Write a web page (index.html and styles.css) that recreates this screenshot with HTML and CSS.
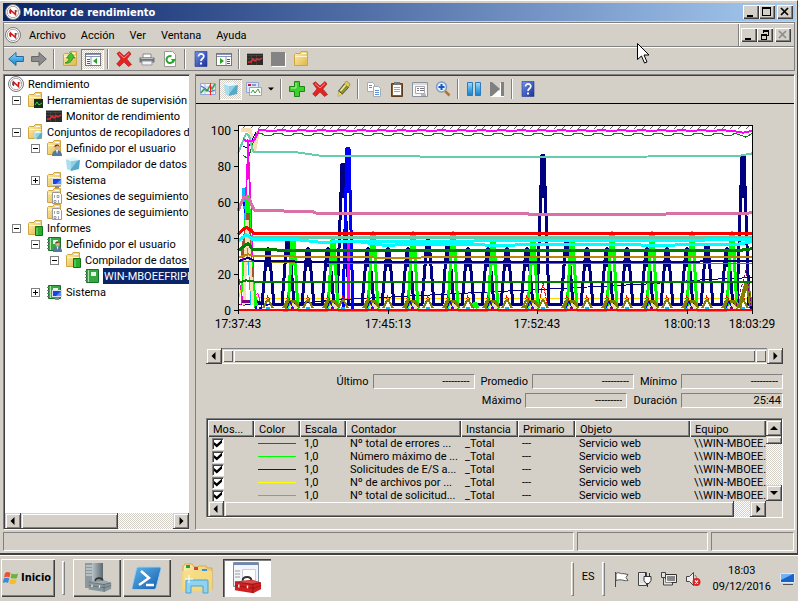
FILE: index.html
```html
<!DOCTYPE html>
<html lang="es">
<head>
<meta charset="utf-8">
<title>Monitor de rendimiento</title>
<link rel="stylesheet" href="styles.css">
</head>
<body>
<svg class="defs" aria-hidden="true">
  <defs>
    <linearGradient id="gBlue" x1="0" y1="0" x2="0" y2="1"><stop offset="0" stop-color="#a5dcf8"/><stop offset=".5" stop-color="#45aee8"/><stop offset="1" stop-color="#1b7cc4"/></linearGradient>
    <linearGradient id="gFold" x1="0" y1="0" x2="1" y2="1"><stop offset="0" stop-color="#fdf0b0"/><stop offset="1" stop-color="#e0b548"/></linearGradient>
    <linearGradient id="gHelp" x1="0" y1="0" x2="1" y2="1"><stop offset="0" stop-color="#6f93ea"/><stop offset="1" stop-color="#1b2f9a"/></linearGradient>
    <linearGradient id="gPs" x1="0" y1="0" x2="1" y2="1"><stop offset="0" stop-color="#5fb4ea"/><stop offset="1" stop-color="#125cae"/></linearGradient>
    <linearGradient id="gSteel" x1="0" y1="0" x2="1" y2="0"><stop offset="0" stop-color="#b9c3c8"/><stop offset="1" stop-color="#5b6970"/></linearGradient>
  </defs>
  <symbol id="gauge" viewBox="0 0 16 16"><circle cx="8" cy="8" r="7.5" fill="#fff" stroke="#777"/><circle cx="8" cy="8" r="5.7" fill="#fff" stroke="#aaa"/><path d="M5.500 10V6L10.500 10.500V6" fill="none" stroke="#d01818" stroke-width="1.500"/><path d="M4.500 9V6M11.800 8V6" stroke="#444" stroke-width=".7"/></symbol>
  <symbol id="folder" viewBox="0 0 16 16"><path d="M1.500 14.500V3.500l1-1H7l1-2h6.500v14z" fill="url(#gFold)" stroke="#d2a63f"/><path d="M2 5.500h12" stroke="#fff6cc"/><path d="M9 2.500h4" stroke="#fff"/></symbol>
  <symbol id="back" viewBox="0 0 16 16"><path d="M.7 8 8 1.500v4h7.400v5H8v4z" fill="url(#gBlue)" stroke="#2468a0"/></symbol>
  <symbol id="fwd" viewBox="0 0 16 16"><path d="M15.300 8 8 1.500v4H.6v5H8v4z" fill="#8c8c8c" stroke="#666"/></symbol>
  <symbol id="up" viewBox="0 0 16 16"><use href="#folder"/><path d="M3 12c3-1 4-3 4-5H4.500L9 1.500 13 7h-2.500c0 3-3 6-7.500 5z" fill="#41c52d" stroke="#1d801a" stroke-width=".7"/></symbol>
  <symbol id="panel" viewBox="0 0 16 16"><rect x=".5" y="2.500" width="15" height="12" fill="#fff" stroke="#777"/><path d="M1 3.500h14M1 5.500h14M6 6v8" stroke="#8b96b5"/><path d="M2 8.500h3M2 10.500h3M2 12.500h3" stroke="#557"/><path d="M12 7v6L8 10z" fill="#24a324"/></symbol>
  <symbol id="panel2" viewBox="0 0 16 16"><rect x=".5" y="2.500" width="15" height="12" fill="#fff" stroke="#777"/><path d="M1 3.500h14M1 5.500h14M10 6v8" stroke="#8b96b5"/><path d="M11 8.500h3M11 10.500h3M11 12.500h3" stroke="#557"/><path d="M4 7v6l4-3z" fill="#24a324"/></symbol>
  <symbol id="cross" viewBox="0 0 16 16"><path d="M1 2.500 3.500.8 8 5l5-4.500L15 3l-4.200 5L15.500 13.500 12.500 15.500 8 11l-4.500 4.500L.7 13 5 8z" fill="#e32424" stroke="#a31010" stroke-width=".6"/><path d="M3 2.500 8 7l5-4.500" fill="none" stroke="#f88"/></symbol>
  <symbol id="printer" viewBox="0 0 16 16"><path d="M4 3h8v4H4z" fill="#fff" stroke="#888"/><path d="M.5 6.500h15v5H.5z" fill="#70757c"/><path d="M2 7.500h12" stroke="#b8bcc2"/><path d="M3 10h10v4H3z" fill="#eef4fa" stroke="#999"/></symbol>
  <symbol id="refresh" viewBox="0 0 16 16"><path d="M2.500.5h8l3 3v12h-11z" fill="#fff" stroke="#999"/><path d="M11.500 9a3.500 3.500 0 1 1-2-3.600" fill="none" stroke="#2da52d" stroke-width="2"/><path d="M9 8h5l-2.500 4z" fill="#2da52d"/></symbol>
  <symbol id="help" viewBox="0 0 16 16"><path d="M2 .5h12v15H2z" fill="url(#gHelp)" stroke="#223a8a" stroke-width=".6"/><path d="M5.500 5.500c0-3.500 5.500-3.300 5.300 0C10.800 7.500 8 7.500 8 10" fill="none" stroke="#fff" stroke-width="1.700"/><path d="M7 11.500h2v2H7z" fill="#fff"/></symbol>
  <symbol id="mon" viewBox="0 0 16 16"><path d="M0 2h16v12H0z" fill="#2b2b2b"/><path d="M0 2.500h16" stroke="#999"/><path d="M0 4.500h16M0 7.500h16M4.500 4v10M9.500 4v10" stroke="#555" stroke-width=".5"/><path d="M1 11h3l2-3 2 2 2-2 2 1 3-2" fill="none" stroke="#e62e2e" stroke-width="1.500"/></symbol>
  <symbol id="stopg" viewBox="0 0 16 16"><path d="M2 2h14v14H2z" fill="#fff"/><path d="M1 1h14v14H1z" fill="#848484"/></symbol>
  <symbol id="cube" viewBox="0 0 16 16"><path d="m1 3 5 2v10l-4-2z" fill="#a9deec"/><path d="m6 5 9-1-1 9-8 2z" fill="#56a9c9"/><path d="m6 5 7-.8L6 13z" fill="#8fd0e4"/><path d="m1 3 8-2 6 3-9 1z" fill="#e6f8fc"/></symbol>
  <symbol id="fmon" viewBox="0 0 16 16"><use href="#folder"/><path d="M7 7h9v9H7z" fill="#1c2b1c"/><path d="M8 13l2-3 2 3 3-2" fill="none" stroke="#38d838"/></symbol>
  <symbol id="fcube" viewBox="0 0 16 16"><use href="#folder"/><use href="#cube" x="6" y="6" width="10" height="10"/></symbol>
  <symbol id="person" viewBox="0 0 10 12"><circle cx="5" cy="3" r="2.600" fill="#e0ae83"/><path d="M2.500 3C2-.5 8-.5 7.500 3L6 1.500z" fill="#5a3b20"/><path d="M0 12c0-8 10-8 10 0z" fill="#56789a"/><path d="m4 6 1 4 1-4z" fill="#fff"/></symbol>
  <symbol id="fuser" viewBox="0 0 16 16"><use href="#folder"/><use href="#person" x="6" y="4" width="10" height="12"/></symbol>
  <symbol id="pc" viewBox="0 0 10 10"><path d="M0 0h10v7H0z" fill="#dde"/><path d="M1 1h8v5H1z" fill="#1549d8"/><path d="m4 6 5-5v5z" fill="#5d90f5"/><path d="M3 8h4v2H3z" fill="#889"/></symbol>
  <symbol id="fsys" viewBox="0 0 16 16"><use href="#folder"/><use href="#pc" x="6" y="6" width="10" height="10"/></symbol>
  <symbol id="fbin" viewBox="0 0 16 16"><use href="#folder"/><path d="M6.500 4.500h7l2 2v9h-9z" fill="#fff" stroke="#999"/><path d="M8.500 7v3M11 7.500h2v2h-2zM8 12.500h2v2H8zM12.500 12v3" stroke="#889" stroke-width=".8" fill="none"/></symbol>
  <symbol id="frep" viewBox="0 0 16 16"><use href="#folder"/><path d="M8.500 6.500h7v9h-7z" fill="#27ae2d" stroke="#13711a"/><path d="M10 8v7" stroke="#7ae37a"/></symbol>
  <symbol id="book" viewBox="0 0 16 16"><path d="M2.500 1.500h12v13h-12z" fill="#35a844" stroke="#167027"/><path d="M4.500 2v12" stroke="#a9e5a9"/><path d="M1 3.500h3M1 6.500h3M1 9.500h3M1 12.500h3" stroke="#777"/><path d="M7 4h5v4H7z" fill="#e6f7e6"/></symbol>
  <symbol id="buser" viewBox="0 0 16 16"><use href="#book"/><use href="#person" x="7" y="5" width="9" height="11"/></symbol>
  <symbol id="bsys" viewBox="0 0 16 16"><use href="#book"/><use href="#pc" x="6" y="6" width="10" height="10"/></symbol>
  <symbol id="chart1" viewBox="0 0 16 16"><path d="M.5 2.500h15v11H.5z" fill="#eef3fc" stroke="#8fa6d6"/><path d="M1 6h14M1 10h14M5 3v10M13 3v10" stroke="#b5c5e8"/><path d="m1 12 3-4 3 2 3-5 2 3 3-5" fill="none" stroke="#37a637" stroke-width="1.500"/><path d="m1 5 5 3 4 3 5-2" fill="none" stroke="#4167c4"/><path d="M10.500 2v12" stroke="#e22"/></symbol>
  <symbol id="chart2" viewBox="0 0 16 16"><path d="M.5 1.500h12v10H.5z" fill="#dfe7f7" stroke="#8fa6d6"/><path d="M2 3h3v2H2z" fill="#b02040"/><path d="M6 3h4v2H6z" fill="#8898cc"/><path d="M3.500 6.500h12v8h-12z" fill="#fff" stroke="#8fa6d6"/><path d="m5 12 2-3 2 3 3-4 2 4" fill="none" stroke="#3a9a3a"/></symbol>
  <symbol id="plus" viewBox="0 0 16 16"><path d="M5.500.5h5v5h5v5h-5v5h-5v-5h-5v-5h5z" fill="#3fcf2f" stroke="#178a12"/><path d="M7 2v5H2" fill="none" stroke="#b1f5a0"/></symbol>
  <symbol id="pen" viewBox="0 0 16 16"><path d="m3 15.500.5-5.500 4 3z" fill="#f0e040" stroke="#997" stroke-width=".5"/><path d="m3.500 10 5.500-7 4.500 3.500-6 6.500z" fill="#8d9330" stroke="#444" stroke-width=".8"/><path d="m9 3 2.500-3L15 3l-1.500 3.500z" fill="#e3d23a" stroke="#555" stroke-width=".5"/><path d="m5.500 10 5-6" stroke="#f1f08c" stroke-width="1.500"/></symbol>
  <symbol id="copy" viewBox="0 0 16 16"><path d="M1.500 1.500h5l2 2v7h-7z" fill="#fff" stroke="#a4acb8"/><path d="M7.500 5.500h5l2 2v8h-7z" fill="#fff" stroke="#a4acb8"/><path d="M3 4.500h3M3 6.500h3M9 9.500h4M9 11.500h4M9 13.500h4" stroke="#5a90d8"/></symbol>
  <symbol id="clip" viewBox="0 0 16 16"><path d="M2.500 2.500h11v13h-11z" fill="#8a5a30" stroke="#5e3c1c"/><path d="M4 4h8v10H4z" fill="#fff"/><path d="M5 1h6v3H5z" fill="#777"/><path d="M5 6.500h6M5 8.500h6M5 10.500h6" stroke="#9aa"/></symbol>
  <symbol id="props" viewBox="0 0 16 16"><path d="M.5 1.500h15v14H.5z" fill="#f7f7f7" stroke="#8c919a"/><path d="M1 3h14" stroke="#b9c0cc"/><path d="M3.500 5.500h9v7h-9z" fill="#fff" stroke="#aaa"/><path d="M5 7.500h2M5 9.500h2M8 7.500h4M8 9.500h4M9 14h5" stroke="#778"/></symbol>
  <symbol id="mag" viewBox="0 0 16 16"><path d="m10 10 4.500 4.500" stroke="#b8722c" stroke-width="2.500"/><circle cx="6.500" cy="6" r="5" fill="#e6f3fe" stroke="#7d9cc4" stroke-width="1.500"/><path d="M6.500 3v6M3.500 6h6" stroke="#1656c0" stroke-width="2"/></symbol>
  <symbol id="pause" viewBox="0 0 16 16"><path d="M1.500 1.500h5v13h-5zM9.500 1.500h5v13h-5z" fill="url(#gBlue)" stroke="#2a7cc0"/></symbol>
  <symbol id="step" viewBox="0 0 16 16"><path d="m2 2 9 8V2h4v14h-4l-9 0z" fill="#fff"/><path d="M1 1h2l8 7-8 7H1zM12 1h3v14h-3z" fill="#808080"/></symbol>
  <symbol id="al" viewBox="0 0 8 8"><path d="M5.500 0v8l-4-4z"/></symbol>
  <symbol id="ar" viewBox="0 0 8 8"><path d="M2.500 0v8l4-4z"/></symbol>
  <symbol id="au" viewBox="0 0 8 8"><path d="M0 6h8L4 2z"/></symbol>
  <symbol id="ad" viewBox="0 0 8 8"><path d="M0 2h8L4 6z"/></symbol>
  <symbol id="wmin" viewBox="0 0 10 10"><path d="M1 8h6v2H1z"/></symbol>
  <symbol id="wmax" viewBox="0 0 10 10"><path d="M0 0h9v9H0zM1 2v6h7V2z" fill-rule="evenodd"/></symbol>
  <symbol id="wres" viewBox="0 0 10 10"><path d="M3 0h6v6H7V5h1V2H4v1H3zM1 4h6v6H1zM2 6v3h4V6z" fill-rule="evenodd"/></symbol>
  <symbol id="wcls" viewBox="0 0 10 10"><path d="m1 1 7 7M8 1 1 8" stroke="currentColor" stroke-width="1.700"/></symbol>
  <symbol id="toolbox" viewBox="0 0 30 18"><path d="M10 5c0-5 9-5 9 0" fill="none" stroke="#333" stroke-width="2"/><path d="M2 6 20 4l9 3v7l-8 4-19-3z" fill="currentColor"/><path d="m2 6 18 3 9-2M20.500 9v9M2 10l19 3 8-3" stroke="#0004" fill="none"/><path d="m3 6.500 17-2 7 2.500-7 1z" fill="#fff3"/><path d="M6 9v3M15 10v3" stroke="#eee" stroke-width="1.500"/></symbol>
</svg>

<main class="window">
  <header class="titlebar">
    <svg class="ico"><use href="#gauge"/></svg>
    <h1>Monitor de rendimiento</h1>
    <div class="winbtns">
      <button class="wb" aria-label="Minimizar"><svg><use href="#wmin"/></svg></button>
      <button class="wb" aria-label="Maximizar"><svg><use href="#wmax"/></svg></button>
      <button class="wb last" aria-label="Cerrar"><svg><use href="#wcls"/></svg></button>
    </div>
  </header>

  <div class="bars">
    <nav class="menubar">
      <svg class="ico"><use href="#gauge"/></svg>
      <button>Archivo</button><button>Acción</button><button>Ver</button><button>Ventana</button><button>Ayuda</button>
      <div class="winbtns mdi">
        <button class="wb" aria-label="Minimizar consola"><svg><use href="#wmin"/></svg></button>
        <button class="wb" aria-label="Restaurar consola"><svg><use href="#wres"/></svg></button>
        <button class="wb last" disabled aria-label="Cerrar consola"><svg><use href="#wcls"/></svg></button>
      </div>
    </nav>
    <div class="toolbar" role="toolbar">
      <button class="tb" aria-label="Atrás"><svg><use href="#back"/></svg></button>
      <button class="tb" aria-label="Adelante"><svg><use href="#fwd"/></svg></button>
      <i class="sep"></i>
      <button class="tb" aria-label="Subir"><svg><use href="#up"/></svg></button>
      <button class="tb on" aria-label="Árbol"><svg><use href="#panel"/></svg></button>
      <i class="sep"></i>
      <button class="tb" aria-label="Eliminar"><svg><use href="#cross"/></svg></button>
      <button class="tb" aria-label="Imprimir"><svg><use href="#printer"/></svg></button>
      <button class="tb" aria-label="Actualizar"><svg><use href="#refresh"/></svg></button>
      <i class="sep"></i>
      <button class="tb" aria-label="Ayuda"><svg><use href="#help"/></svg></button>
      <button class="tb" aria-label="Panel"><svg><use href="#panel2"/></svg></button>
      <i class="sep"></i>
      <button class="tb" aria-label="Monitor"><svg><use href="#mon"/></svg></button>
      <button class="tb" aria-label="Detener"><svg><use href="#stopg"/></svg></button>
      <button class="tb" aria-label="Carpeta"><svg><use href="#folder"/></svg></button>
    </div>
  </div>

  <div class="panes">
    <aside class="treepane">
      <ul class="tree">
        <li class="l0"><svg><use href="#gauge"/></svg><span>Rendimiento</span></li>
        <li class="l1"><b class="box"></b><svg><use href="#fmon"/></svg><span>Herramientas de supervisión</span></li>
        <li class="l2 leaf"><svg><use href="#mon"/></svg><span>Monitor de rendimiento</span></li>
        <li class="l1"><b class="box"></b><svg><use href="#fcube"/></svg><span>Conjuntos de recopiladores de</span></li>
        <li class="l2"><b class="box"></b><svg><use href="#fuser"/></svg><span>Definido por el usuario</span></li>
        <li class="l3 leaf"><svg><use href="#cube"/></svg><span>Compilador de datos I</span></li>
        <li class="l2"><b class="box plus"></b><svg><use href="#fsys"/></svg><span>Sistema</span></li>
        <li class="l2 leaf"><svg><use href="#fbin"/></svg><span>Sesiones de seguimiento d</span></li>
        <li class="l2 leaf"><svg><use href="#fbin"/></svg><span>Sesiones de seguimiento d</span></li>
        <li class="l1"><b class="box"></b><svg><use href="#frep"/></svg><span>Informes</span></li>
        <li class="l2"><b class="box"></b><svg><use href="#buser"/></svg><span>Definido por el usuario</span></li>
        <li class="l3"><b class="box"></b><svg><use href="#frep"/></svg><span>Compilador de datos I</span></li>
        <li class="l4 leaf"><svg><use href="#book"/></svg><span class="sel">WIN-MBOEEFRIPI</span></li>
        <li class="l2"><b class="box plus"></b><svg><use href="#bsys"/></svg><span>Sistema</span></li>
      </ul>
      <div class="hscroll">
        <button class="sb" aria-label="Izquierda"><svg><use href="#al"/></svg></button>
        <div class="track"><div class="thumb half"></div></div>
        <button class="sb" aria-label="Derecha"><svg><use href="#ar"/></svg></button>
      </div>
    </aside>

    <section class="view">
      <div class="toolbar graphbar" role="toolbar">
        <button class="tb" aria-label="Ver actividad"><svg><use href="#chart1"/></svg></button>
        <button class="tb on" aria-label="Ver registro"><svg><use href="#cube"/></svg></button>
        <button class="tb" aria-label="Tipo de gráfico"><svg><use href="#chart2"/></svg></button>
        <button class="drop" aria-label="Más tipos"><svg><use href="#ad"/></svg></button>
        <i class="sep"></i>
        <button class="tb" aria-label="Agregar"><svg><use href="#plus"/></svg></button>
        <button class="tb" aria-label="Quitar"><svg><use href="#cross"/></svg></button>
        <button class="tb" aria-label="Resaltar"><svg><use href="#pen"/></svg></button>
        <i class="sep"></i>
        <button class="tb" aria-label="Copiar"><svg><use href="#copy"/></svg></button>
        <button class="tb" aria-label="Pegar"><svg><use href="#clip"/></svg></button>
        <button class="tb" aria-label="Propiedades"><svg><use href="#props"/></svg></button>
        <button class="tb" aria-label="Zoom"><svg><use href="#mag"/></svg></button>
        <i class="sep"></i>
        <button class="tb" aria-label="Pausar"><svg><use href="#pause"/></svg></button>
        <button class="tb" aria-label="Avanzar"><svg><use href="#step"/></svg></button>
        <i class="sep"></i>
        <button class="tb" aria-label="Ayuda del gráfico"><svg><use href="#help"/></svg></button>
      </div>

      <svg class="graph" id="graph" viewBox="0 0 598 235" role="img" aria-label="Gráfico de rendimiento"></svg>

      <div class="details">
        <div class="range">
          <button class="sb" aria-label="Inicio anterior"><svg><use href="#al"/></svg></button>
          <div class="rangetrack"><i class="grip"></i><div class="span"></div><i class="grip"></i></div>
          <button class="sb" aria-label="Fin posterior"><svg><use href="#ar"/></svg></button>
        </div>
        <div class="stats">
          <div class="statrow">
            <label for="ult">Último</label><input id="ult" readonly value="---------">
            <label for="pro">Promedio</label><input id="pro" readonly value="---------">
            <label for="min">Mínimo</label><input id="min" readonly value="---------">
          </div>
          <div class="statrow">
            <label for="max">Máximo</label><input id="max" readonly value="---------">
            <label for="dur">Duración</label><input id="dur" class="full" readonly value="25:44">
          </div>
        </div>
        <div class="legend">
          <div class="rows">
            <table>
              <colgroup><col class="c46"><col class="c46"><col class="c46"><col class="c115"><col class="c57"><col class="c57"><col class="c115"><col></colgroup>
              <thead><tr><th>Mos...</th><th>Color</th><th>Escala</th><th>Contador</th><th>Instancia</th><th>Primario</th><th>Objeto</th><th>Equipo</th></tr></thead>
              <tbody>
                <tr><td><input type="checkbox" checked aria-label="Nº total de errores"></td><td><hr class="red"></td><td>1,0</td><td>Nº total de errores ...</td><td>_Total</td><td>---</td><td>Servicio web</td><td>\\WIN-MBOEE.</td></tr>
                <tr><td><input type="checkbox" checked aria-label="Número máximo"></td><td><hr class="lime"></td><td>1,0</td><td>Número máximo de ...</td><td>_Total</td><td>---</td><td>Servicio web</td><td>\\WIN-MBOEE.</td></tr>
                <tr><td><input type="checkbox" checked aria-label="Solicitudes de E/S"></td><td><hr class="blue"></td><td>1,0</td><td>Solicitudes de E/S a...</td><td>_Total</td><td>---</td><td>Servicio web</td><td>\\WIN-MBOEE.</td></tr>
                <tr><td><input type="checkbox" checked aria-label="Nº de archivos"></td><td><hr class="yellow"></td><td>1,0</td><td>Nº de archivos por ...</td><td>_Total</td><td>---</td><td>Servicio web</td><td>\\WIN-MBOEE.</td></tr>
                <tr><td><input type="checkbox" checked aria-label="Nº total de solicitudes"></td><td><hr class="pink"></td><td>1,0</td><td>Nº total de solicitud...</td><td>_Total</td><td>---</td><td>Servicio web</td><td>\\WIN-MBOEE.</td></tr>
              </tbody>
            </table>
          </div>
          <div class="vscroll">
            <button class="sb" aria-label="Arriba"><svg><use href="#au"/></svg></button>
            <div class="track"><div class="thumb small"></div></div>
            <button class="sb" aria-label="Abajo"><svg><use href="#ad"/></svg></button>
          </div>
          <div class="hscroll">
            <button class="sb" aria-label="Izquierda"><svg><use href="#al"/></svg></button>
            <div class="track"><div class="thumb most"></div></div>
            <button class="sb" aria-label="Derecha"><svg><use href="#ar"/></svg></button>
          </div>
        </div>
      </div>
    </section>
  </div>

  <footer class="status"><div class="s1"></div><div class="s2"></div><div class="s3"></div></footer>
</main>

<footer class="taskbar">
  <button class="start">
    <svg viewBox="0 0 16 16"><path d="M2 3c2-1.500 4-1 5.500 0L6.500 7.500C5 6.500 3 6.300 1 7.500z" fill="#e8552a"/><path d="M8.500 3.500c2 1 4 1 6.500 0L14 8c-2.500 1-4.500.7-6.300-.3z" fill="#6db33b"/><path d="M.8 8.500c2-1 4-1 5.500 0L5 13c-1.500-1-3.500-1-5.200 0z" fill="#3b87dd"/><path d="M7.500 9c2 1 4 1 6.200 0l-1.200 4.500c-2 1-4 1-6.300 0z" fill="#f6bd27"/></svg>
    Inicio</button>
  <i class="divider"></i>
  <button class="task" aria-label="Administrador del servidor"><svg viewBox="0 0 32 32"><path d="M4 1h7l3 1v22l-3 2H4z" fill="#8d999e"/><path d="M5 4h6M5 7h6M5 10h6M5 13h6" stroke="#dfe5e8"/><path d="M11 1h11v20H11z" fill="url(#gSteel)"/><use href="#toolbox" x="6" y="14" width="25" height="17" class="steel"/></svg></button>
  <button class="task" aria-label="PowerShell"><svg viewBox="0 0 32 32"><path d="M7 5h22q1.500 0 1 2l-5 19q-.5 1.500-2 1.500H2q-1.500 0-1-2L5.500 6.500Q6 5 7 5z" fill="url(#gPs)" stroke="#9fd0f0"/><path d="m10 9 8 7-10 7" fill="none" stroke="#fff" stroke-width="2.500"/><path d="M15 23h8" stroke="#fff" stroke-width="2.500"/></svg></button>
  <button class="task flat" aria-label="Explorador"><svg viewBox="0 0 32 32"><path d="M2 28V5l2-3h7l2 3h4l1-1h7l1 2h5v22z" fill="url(#gFold)" stroke="#d5ab49"/><path d="M5 3h4v3H5z" fill="#25a53a"/><path d="M13 5h4v3h-4z" fill="#d9432f"/><path d="M21 7h5v2h-5z" fill="#3f8fe0"/><path d="M1 9h30v20H1z" fill="#f6dd85" opacity=".8"/><path d="M5 31V19q0-1 1-1h20q1 0 1 1v12h-5v-7H10v7z" fill="#8fd3f3" stroke="#4ba2d3"/><path d="M8 13v8M4 17h8" stroke="#fff"/></svg></button>
  <button class="task active" aria-label="Monitor de rendimiento"><svg viewBox="0 0 32 32"><path d="M2.500.5h25v24h-25z" fill="#f2f5fa" stroke="#8090aa"/><path d="M3 2h24" stroke="#6f86b5" stroke-width="2"/><path d="M4 9h5M4 12h5M4 15h5" stroke="#999"/><path d="M11.500 7.500h13v14h-13z" fill="#fff" stroke="#ccd"/><use href="#toolbox" x="2" y="13" width="29" height="19" class="crimson"/></svg></button>
  <div class="tray">
    <i class="divider"></i>
    <span class="lang">ES</span>
    <i class="divider"></i>
    <svg viewBox="0 0 16 16"><path d="M2.500 1v15" stroke="#444"/><path d="M3 2.500c3-2 5 1 7 0l5 1-2 3 2 3c-4 1-6-2-12 0z" fill="#fff" stroke="#555"/></svg>
    <svg viewBox="0 0 16 16"><path d="M1.500 1.500h8v13h-8z" fill="#eee" stroke="#444"/><path d="M3 3h5v9H3z" fill="#ddd"/><path d="M7 5.500h7v4l-2 3H9l-2-3zM8.500 2v3M12.500 2v3M10.500 13v3" fill="#fff" stroke="#333"/></svg>
    <svg viewBox="0 0 16 16"><path d="M4.500 3.500h11v8h-11z" fill="#eee" stroke="#333"/><path d="M6 5h8v5H6z" fill="#888"/><path d="M.5 1.500h4v5h-4zM2.500 7v7h9v-2" fill="#fff" fill-opacity=".4" stroke="#444"/></svg>
    <svg viewBox="0 0 16 16"><path d="M1.500 5.500h3l4-4v13l-4-4h-3z" fill="#eee" stroke="#444"/><path d="M10 4c2 2 2 3 1 5" stroke="#777" fill="none"/><circle cx="11.500" cy="11" r="4" fill="#e02020"/><path d="m10 9.500 3 3M13 9.500l-3 3" stroke="#fff" stroke-width="1.300"/></svg>
    <time>18:03<br>09/12/2016</time>
    <svg class="desk" viewBox="0 0 16 16"><path d="M1.500 2.500h14v9h-14z" fill="#1a62c8" stroke="#dfe8f5"/><path d="m2 3 12 0-12 6z" fill="#6fb4f0"/><path d="M4 13.500h10" stroke="#555"/></svg>
  </div>
</footer>

<svg class="cursor" viewBox="0 0 13 21"><path d="M.5.5v16l4-3.500 3 7 2.500-1-3-7h5z" fill="#fff" stroke="#000"/></svg>
<script src="graph.js"></script>
</body>
</html>
```
FILE: graph.js
```js
const NS = "http://www.w3.org/2000/svg";
const graph = document.getElementById("graph");
const LEFT = 42, BASE = 205, WIDTH = 514, UNIT = 1.8;

function add(parent, name, attrs, text) {
  const el = document.createElementNS(NS, name);
  for (const key in attrs) el.setAttribute(key, attrs[key]);
  if (text) el.textContent = text;
  parent.appendChild(el);
  return el;
}
const px = x => LEFT + x;
const py = v => Math.round((BASE - v * UNIT) * 10) / 10;
function line(color, width, points, extra) {
  return add(graph, "polyline", Object.assign({
    points: points.map(p => px(p[0]) + "," + py(p[1])).join(" "),
    fill: "none", stroke: color, "stroke-width": width, "stroke-linejoin": "bevel"
  }, extra));
}
// Rises from the floor to each peak and falls back to it.
function spikes(floor, half, peaks, start) {
  const pts = [[start, floor]];
  for (const [x, v] of peaks) pts.push([x - half, floor], [x - 1, v], [x + 1, v], [x + half, floor]);
  return pts;
}

add(graph, "rect", { x: LEFT, y: 20, width: WIDTH, height: 185, fill: "#fff" });
for (let x = 4; x < WIDTH - 4; x += 8)
  add(graph, "path", { d: `M${px(x)} 24l4-4`, stroke: "#666", "stroke-width": 1 });

// Steady series
const dips = [];
for (let x = 30; x <= 500; x += 20) dips.push([x - 7, 98.2], [x - 3, 97], [x + 3, 97], [x + 7, 98.2]);
line("#f5deb3", 4, [[3, 100], [12, 100], [16, 88], [20, 99]]);
line("#008000", 1, [[5, 86], [10, 84], [18, 98], ...dips, [508, 96], [514, 98]]);
line("#000080", 1, [[5, 91], [10, 90], [18, 99]]);
line("#ffd700", 1, [[0, 5], [10, 27], [14, 8], [24, 6.5], [514, 6.5]]);
line("#000080", 1, [[0, 3], [40, 3], [110, 6], [180, 8], [250, 10], [340, 12.5], [410, 14.5], [470, 17], [514, 18]]);
line("#f0c", 1, [[0, 20], [6, 2], [10, 95], [14, 8], [20, 9], [24, 1]]);
line("#f0f", 1, [[3, 3], [10, 94], [13, 60], [17, 1]]);
line("#0bf", 3, [[5, 68], [9, 45], [14, 3]]);
line("#00f", 2, [[6, 60], [12, 30], [18, 0], [30, 3]], { "stroke-dasharray": "4 3" });

// Navy and green activity
const navy = [[30, 34], [50, 40], [70, 34], [90, 34], [105, 81], [130, 34], [150, 34], [170, 34], [190, 39],
  [210, 36], [230, 34], [250, 34], [269, 34], [289, 34], [305, 86], [329, 39], [349, 34], [369, 34],
  [389, 34], [409, 34], [429, 34], [449, 34], [469, 36], [489, 34], [505, 86]];
line("#000080", 3, [[18, 5], ...spikes(3, 6, navy, 24), [514, 1]]);
for (const [x, v] of navy) if (v < 60) line("#000080", 4, [[x, v - 10], [x, v]]);
for (const x of [105, 305, 505]) line("#000080", 4, [[x, 62], [x, 80]]);
const green = [[55, 39], [95, 39], [135, 43], [175, 43], [215, 43], [255, 39], [295, 39], [334, 39],
  [374, 43], [414, 43], [454, 43], [494, 43]];
line("#00ff00", 3, spikes(0, 5, green, 45));
line("#00ff00", 4, [[5, 10], [8, 45], [10, 64], [13, 20], [18, 2]]);
for (const [x, v] of green) line("#00ff00", 4, [[x, v - 14], [x, v]]);
line("#00f", 3, [[105, 0], [109, 90], [111, 90], [115, 0]]);
line("#00f", 4, [[110, 65], [110, 88]]);
line("#f0f", 3, [[110, 6], [110, 38]]);
line("#00ff00", 4, [[234, 1], [237, 4], [240, 1]]);

// Small humps near zero
for (const [x] of navy) {
  line("#f00", 1, [[x - 5, 1], [x, x === 305 ? 15 : 8], [x + 5, 1]], { "stroke-dasharray": "4 1" });
  line("#808000", 2, [[x - 5, 1], [x, 6], [x + 5, 1]]);
  line("#00bfff", 2, [[x - 2, 1], [x + 2, 1]]);
}
for (const [x] of green) {
  line("#808000", 3, [[x - 8, 1], [x - 3, 5], [x + 2, 5], [x + 6, 1]]);
  line("#f5deb3", 3, [[x - 4, 1], [x, 3], [x + 4, 1]]);
  line("#00f", 1, [[x - 6, 1], [x - 3, 5], [x, 1]]);
  line("#800080", 2, [[x - 2, 1], [x + 1, 1]]);
}
line("#808000", 4, [[501, 1], [509, 16], [513, 2]]);
line("#800080", 1, [[498, 2], [508, 22], [513, 3]], { "stroke-dasharray": "3 2" });
line("#a0522d", 3, [[4, 30], [10, 54], [14, 14]]);
line("#f5deb3", 3, [[6, 3], [9, 50], [15, 3]]);
line("#800080", 3, [[4, 5], [12, 5]]);

// Horizontal bands above the activity
line("#66cdaa", 2, [[0, 87], [8, 98], [11, 97], [15, 88], [60, 87.5], [85, 85.5], [300, 85], [500, 85.5], [514, 87]]);
line("#db70a8", 3, [[0, 55], [6, 63], [11, 62], [16, 55.5], [75, 54.5], [80, 53.5], [290, 53.5], [292, 53], [500, 53.5], [514, 54]]);
line("#66cdaa", 3, [[14, 40.5], [514, 40]]);
line("#00ffff", 3, [[0, 38], [8, 42], [15, 39], [60, 39], [84, 37.5], [100, 38], [514, 39]]);
line("#00ffff", 3, [[120, 38], [145, 36], [200, 36.5], [260, 36], [340, 36.5], [420, 36], [500, 36.5], [514, 38]]);
line("#ff0000", 3, [[0, 42], [8, 46], [11, 45], [16, 42.5], [514, 42.3]]);
line("#008000", 3, [[0, 33], [10, 37], [15, 33.5], [85, 33], [500, 33], [514, 34]]);
line("#b8860b", 2, [[0, 29], [10, 31], [16, 30], [160, 29], [230, 29.5], [514, 29.5]]);
line("#808000", 1, [[0, 27], [100, 26], [514, 26]]);
line("#000080", 2, [[0, 27], [10, 29], [16, 27.5], [90, 26.5], [514, 27]]);
line("#008000", 2, [[0, 15], [8, 16.5], [20, 15.5], [514, 15.3]]);
const ceiling = [[5, 95], [8, 94], [16, 94], [21, 100]];
for (let x = 30; x < 500; x += 20) ceiling.push([x - 5, 100], [x, 99.5], [x + 5, 99.5]);
line("#f0f", 2, [...ceiling, [505, 98.5], [514, 99.5]]);
line("#ff0000", 2, [[0, 0.3], [514, 0.3]]);

// Frame, ticks and labels
add(graph, "path", { d: "M42.5 206V20.5H556.5V206", fill: "none", stroke: "#000" });
for (const v of [0, 20, 40, 60, 80, 100]) {
  add(graph, "path", { d: `M38 ${BASE - v * UNIT + 0.5}h5`, stroke: "#000" });
  add(graph, "text", { x: 35, y: BASE - v * UNIT + 5, "text-anchor": "end" }, String(v));
}
const times = [[0, "17:37:43"], [150, "17:45:13"], [299, "17:52:43"], [449, "18:00:13"], [514, "18:03:29"]];
for (const [x, t] of times) {
  add(graph, "path", { d: `M${px(x) + 0.5} 205v4`, stroke: "#000" });
  add(graph, "text", { x: px(x), y: 223, "text-anchor": "middle" }, t);
}
```
FILE: styles.css
```css
* { box-sizing: border-box; }
body {
  margin: 0;
  height: 100vh;
  display: flex;
  flex-direction: column;
  overflow: hidden;
  background: #d4d0c8;
  color: #000;
  font: 11px/13px Roboto, "Noto Sans", sans-serif;
}
button, input { font: inherit; color: inherit; margin: 0; padding: 0; border: 0; background: none; border-radius: 0; }
svg { display: block; flex: none; }
.defs { position: absolute; width: 0; height: 0; }
.ico { width: 16px; height: 16px; }

.window {
  flex: 1;
  min-height: 0;
  display: flex;
  flex-direction: column;
  padding: 2px 2px 2px 3px;
  border-top: 1px solid #fff;
  border-right: 1px solid #404040;
  border-bottom: 2px solid #404040;
}
.titlebar {
  display: flex;
  align-items: center;
  height: 18px;
  flex: none;
  padding: 0 2px;
  background: linear-gradient(90deg, #0a246a, #a6caf0);
  color: #fff;
}
.titlebar h1 { margin: 0 0 0 2px; font: bold 11px "DejaVu Sans Condensed", sans-serif; flex: 1; }
.winbtns { display: flex; }
.wb {
  width: 16px;
  height: 14px;
  display: grid;
  place-items: center;
  background: #d4d0c8;
  color: #000;
  box-shadow: inset 1px 1px #fff, inset -1px -1px #404040, inset -2px -2px #808080;
}
.wb svg { width: 10px; height: 10px; fill: currentColor; }
.wb.last { margin-left: 2px; }
.wb:disabled { color: #8c8c8c; }

.bars { flex: none; margin-top: 1px; border: 1px solid #808080; }
.menubar {
  display: flex;
  align-items: center;
  height: 24px;
  padding-left: 1px;
  border-top: 1px solid #fff;
  border-bottom: 1px solid #808080;
}
.menubar > button { padding: 0 7px 0 8px; }
.mdi { margin-left: auto; height: 22px; align-items: center; padding: 0 3px 0 2px; border-left: 1px solid #808080; box-shadow: inset 1px 0 #fff; }
.toolbar { display: flex; align-items: center; height: 23px; border-top: 1px solid #fff; }
.tb { width: 23px; height: 21px; display: grid; place-items: center; }
.tb svg { width: 16px; height: 16px; }
.on {
  background: repeating-conic-gradient(#fff 0 25%, #d4d0c8 0 50%) 0 0 / 2px 2px;
  box-shadow: inset 1px 1px #808080, inset -1px -1px #fff;
}
.sep { width: 8px; height: 20px; border-left: 3px solid transparent; background: linear-gradient(90deg, #808080 1px, #fff 1px, #fff 2px, transparent 2px) padding-box; }

.panes { flex: 1; min-height: 0; display: flex; gap: 5px; margin-top: 3px; }
.treepane {
  flex: 0 0 187px;
  display: flex;
  flex-direction: column;
  overflow: hidden;
  background: #fff;
  border: 1px solid #808080;
  border-right-color: #d4d0c8;
  border-bottom-color: #fff;
  box-shadow: inset 1px 1px #404040;
}
.tree { flex: 1; margin: 0; padding: 1px 0 0 1px; list-style: none; overflow: hidden; }
.tree li { display: flex; align-items: center; height: 16px; white-space: nowrap; }
.tree svg { width: 16px; height: 16px; }
.tree span { line-height: 14px; padding: 2px 1px 0; margin-left: 3px; }
.tree .sel { flex: 1; background: #0a246a; color: #fff; }
.l0 { padding-left: 3px; }
.l1 { padding-left: 7px; }
.l2 { padding-left: 26px; }
.l3 { padding-left: 45px; }
.l4 { padding-left: 64px; }
.leaf::before { content: ""; width: 15px; flex: none; }
.box {
  width: 9px;
  height: 9px;
  flex: none;
  margin-right: 6px;
  border: 1px solid #808080;
  background: linear-gradient(#000, #000) center / 5px 1px no-repeat;
}
.plus { background: linear-gradient(#000, #000) center / 5px 1px no-repeat, linear-gradient(#000, #000) center / 1px 5px no-repeat; }

.sb, .thumb {
  background: #d4d0c8;
  box-shadow: inset -1px -1px #404040, inset 1px 1px #d4d0c8, inset 2px 2px #fff, inset -2px -2px #808080;
}
.sb { width: 16px; height: 16px; flex: none; display: grid; place-items: center; }
.sb svg { width: 8px; height: 8px; }
.hscroll { display: flex; height: 16px; flex: none; }
.vscroll { display: flex; flex-direction: column; width: 16px; }
.treepane .hscroll { margin-left: 1px; }
.track { flex: 1; min-width: 0; background: repeating-conic-gradient(#fff 0 25%, #d4d0c8 0 50%) 0 0 / 2px 2px; }
.thumb { height: 100%; }
.thumb.half { width: 64%; }
.thumb.most { width: 97%; }
.thumb.small { height: 8px; }

.view {
  flex: 1;
  min-width: 0;
  display: flex;
  flex-direction: column;
  border: 1px solid #808080;
  border-right-color: #fff;
  border-bottom-color: #fff;
  box-shadow: inset 0 1px #404040;
}
.graphbar { flex: none; height: 29px; border-top: 0; border-bottom: 1px solid #000; }
.drop { width: 12px; height: 21px; display: grid; place-items: center; }
.drop svg { width: 6px; height: 6px; }
.graph { width: 100%; height: auto; margin-top: 1px; }
.graph text { font-size: 12px; }
.graph polyline, .graph path { shape-rendering: crispEdges; }
.details { padding: 8px 11px 0 10px; }
.range { display: flex; height: 16px; }
.rangetrack { flex: 1; display: flex; gap: 1px; padding: 1px; border-top: 1px solid #808080; border-bottom: 1px solid #fff; }
.grip { width: 10px; box-shadow: inset 1px 1px #fff, inset -1px -1px #606060; }
.span { flex: 1; box-shadow: inset 1px 1px #fff, inset -1px -1px #606060; }
.stats { display: grid; gap: 4px; margin-top: 10px; }
.statrow { display: flex; justify-content: flex-end; height: 15px; }
.statrow label { line-height: 15px; margin-right: 4px; }
.statrow input {
  width: 102px;
  padding-right: 4px;
  text-align: right;
  border: 1px solid;
  border-color: #808080 #fff #fff #808080;
}
.statrow input.full { padding-right: 1px; }
.statrow input:not(:last-child) { margin-right: 6px; }

.legend {
  display: grid;
  grid-template: 81px 16px / 1fr 16px;
  margin-top: 10px;
  padding: 1px 0 0 1px;
  border: 1px solid;
  border-color: #808080 #fff #fff #808080;
  box-shadow: inset 1px 1px #404040;
}
.rows { overflow: hidden; min-width: 0; }
table { width: 100%; border-collapse: collapse; table-layout: fixed; }
.c46 { width: 46px; }
.c57 { width: 57px; }
.c115 { width: 115px; }
th {
  height: 17px;
  padding: 1px 0 0 5px;
  text-align: left;
  font-weight: normal;
  overflow: hidden;
  white-space: nowrap;
  box-shadow: inset 1px 1px #fff, inset -1px -1px #404040, inset -2px -2px #808080;
}
td { height: 13px; padding: 0 0 0 4px; line-height: 13px; white-space: nowrap; overflow: hidden; }
td input {
  appearance: none;
  display: block;
  width: 12px;
  height: 12px;
  background: #fff;
  border: 1px solid;
  border-color: #808080 #fff #fff #808080;
  box-shadow: inset 1px 1px #404040;
}
td input:checked::before {
  content: "";
  display: block;
  width: 8px;
  height: 8px;
  margin: 1px;
  background: #000;
  clip-path: polygon(0 30%, 35% 60%, 100% 0, 100% 40%, 35% 100%, 0 70%);
}
hr { width: 38px; height: 1px; margin: 0; border: 0; }
.red { background: #f00; }
.lime { background: #0f0; }
.blue { background: #00f; }
.yellow { background: #ff0; }
.pink { background: #db70a8; }

.status { display: flex; gap: 3px; height: 19px; flex: none; margin: 2px 1px 0 0; }
.status div { border: 1px solid; border-color: #808080 #fff #fff #808080; }
.s1 { flex: 1; }
.s2 { width: 131px; }
.s3 { width: 83px; }

.taskbar {
  display: flex;
  align-items: center;
  flex: none;
  height: 46px;
  padding: 0 3px 2px 1px;
  border-top: 1px solid #fff;
}
.start, .task { background: #d4d0c8; box-shadow: inset 1px 1px #fff, inset -1px -1px #404040, inset -2px -2px #808080; }
.start { display: flex; align-items: center; gap: 2px; width: 54px; height: 38px; padding-left: 2px; font: bold 11px "DejaVu Sans Condensed", sans-serif; }
.start svg { width: 16px; height: 16px; }
.divider { width: 3px; height: 34px; border: 1px solid; border-color: #fff #808080 #808080 #fff; flex: none; }
.start + .divider { margin: 0 8px 0 7px; }
.task { width: 48px; height: 38px; margin-right: 2px; display: grid; place-items: center; }
.task svg { width: 32px; height: 32px; }
.flat { background: none; box-shadow: none; }
.active { background: #fff; box-shadow: inset 1px 1px #404040, inset 2px 2px #808080, inset -1px -1px #fff; }
.steel { color: #87969d; }
.crimson { color: #cf1f1f; }
.tray { display: flex; align-items: center; margin-left: auto; gap: 8px; padding-top: 2px; }
.tray svg { width: 16px; height: 16px; }
.tray time { line-height: 16px; text-align: center; margin-left: 3px; }
.lang { margin: 0 0 4px; }

.cursor { position: absolute; left: 637px; top: 43px; width: 13px; height: 21px; }
```
